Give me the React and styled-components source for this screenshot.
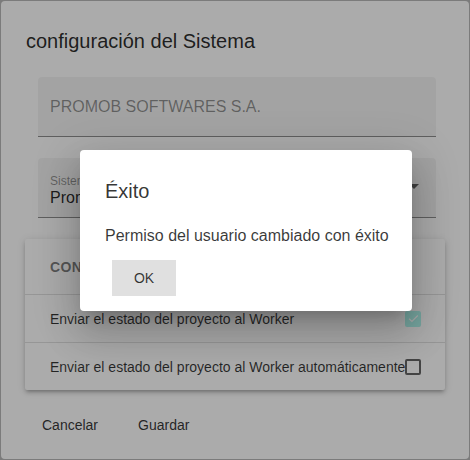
import styled, { createGlobalStyle } from "styled-components";

const GlobalStyle = createGlobalStyle`
  html, body {
    margin: 0;
    padding: 0;
    background: #b8b8b8;
    font-family: "Liberation Sans", Arial, sans-serif;
  }
`;

const Screen = styled.div`
  position: relative;
  width: 470px;
  height: 460px;
  padding: 1px;
  box-sizing: border-box;
`;

const Paper = styled.div`
  height: 458px;
  background: #ffffff;
  border-radius: 4px;
  display: flex;
  flex-direction: column;
`;

const Title = styled.h2`
  margin: 0;
  padding: 24px 25px 0;
  font-size: 20px;
  font-weight: 400;
  line-height: 32px;
  color: rgba(0, 0, 0, 0.84);
`;

const Content = styled.div`
  display: flex;
  flex-direction: column;
  padding: 20px 33px 0 24px;
  gap: 21px;
`;

const Field = styled.div`
  position: relative;
  margin-left: 13px;
  height: 59px;
  background: rgba(0, 0, 0, 0.045);
  border-radius: 4px 4px 0 0;
  border-bottom: 1px solid rgba(0, 0, 0, 0.42);
  display: flex;
  flex-direction: column;
  justify-content: center;
  padding: 0 12px;
`;

const FieldValue = styled.div`
  font-size: 16px;
  color: ${(p) => (p.$muted ? "rgba(0,0,0,0.42)" : "rgba(0,0,0,0.84)")};
  line-height: 20px;
`;

const FieldLabel = styled.div`
  font-size: 12px;
  line-height: 14px;
  color: rgba(0, 0, 0, 0.42);
  margin-top: 6px;
`;

const Arrow = styled.svg`
  position: absolute;
  right: 10px;
  top: 16px;
  width: 24px;
  height: 24px;
  fill: rgba(0, 0, 0, 0.6);
`;

const Card = styled.div`
  width: 420px;
  background: #ffffff;
  border-radius: 2px;
  box-shadow: 0 3px 3px -2px rgba(0, 0, 0, 0.2), 0 3px 4px 0 rgba(0, 0, 0, 0.14),
    0 1px 8px 0 rgba(0, 0, 0, 0.12);
  display: flex;
  flex-direction: column;
`;

const CardHeader = styled.div`
  height: 55px;
  display: flex;
  align-items: center;
  padding: 0 25px;
  font-size: 14px;
  font-weight: 700;
  letter-spacing: 0.4px;
  text-transform: uppercase;
  color: rgba(0, 0, 0, 0.52);
  border-bottom: 1px solid rgba(0, 0, 0, 0.12);
`;

const Row = styled.div`
  height: 47px;
  display: flex;
  align-items: center;
  padding: 0 0 0 25px;
  font-size: 14px;
  color: rgba(0, 0, 0, 0.78);
  white-space: nowrap;
  border-bottom: ${(p) => (p.$last ? "none" : "1px solid rgba(0, 0, 0, 0.12)")};
`;

const RowText = styled.span`
  width: 355px;
  flex-shrink: 0;
`;

const Box = styled.span`
  width: 16px;
  height: 16px;
  flex-shrink: 0;
  box-sizing: border-box;
  border-radius: 2px;
  display: flex;
  align-items: center;
  justify-content: center;
  background: ${(p) => (p.$checked ? "rgb(176, 246, 238)" : "transparent")};
  border: ${(p) => (p.$checked ? "none" : "2px solid rgba(0,0,0,0.6)")};
  svg {
    width: 13px;
    height: 13px;
  }
`;

const Actions = styled.div`
  display: flex;
  gap: 24px;
  padding: 17px 0 0 33px;
`;

const TextButton = styled.button`
  border: none;
  background: none;
  font-family: inherit;
  font-size: 14px;
  color: rgba(0, 0, 0, 0.8);
  padding: 8px;
  min-width: 64px;
  line-height: 20px;
`;

const Backdrop = styled.div`
  position: absolute;
  inset: 0;
  background: rgba(0, 0, 0, 0.33);
  padding: 150px 0 0 80px;
  box-sizing: border-box;
`;

const Modal = styled.div`
  width: 332px;
  height: 161px;
  box-sizing: border-box;
  background: #ffffff;
  border-radius: 4px;
  padding: 25px 25px 0;
  box-shadow: 0 11px 15px -7px rgba(0, 0, 0, 0.2), 0 24px 38px 3px rgba(0, 0, 0, 0.14),
    0 9px 46px 8px rgba(0, 0, 0, 0.12);
  display: flex;
  flex-direction: column;
  align-items: flex-start;
`;

const ModalTitle = styled.div`
  font-size: 20px;
  line-height: 32px;
  color: rgba(0, 0, 0, 0.8);
`;

const ModalText = styled.div`
  margin-top: 19px;
  font-size: 16px;
  line-height: 20px;
  white-space: nowrap;
  color: rgba(0, 0, 0, 0.78);
`;

const OkButton = styled.button`
  margin: 14px 0 0 7px;
  width: 64px;
  height: 36px;
  border: none;
  border-radius: 0;
  background: #e0e0e0;
  font-family: inherit;
  font-size: 14px;
  color: rgba(0, 0, 0, 0.78);
`;

const Check = () => (
  <svg viewBox="0 0 24 24">
    <path d="M4 12.5l5 5L20 6.5" fill="none" stroke="#ffffff" strokeWidth="2.2" />
  </svg>
);

export default function App() {
  return (
    <>
      <GlobalStyle />
      <Screen>
        <Paper>
          <Title>configuración del Sistema</Title>
          <Content>
            <Field>
              <FieldValue $muted>PROMOB SOFTWARES S.A.</FieldValue>
            </Field>
            <Field>
              <FieldLabel>Sistema</FieldLabel>
              <FieldValue>Promob</FieldValue>
              <Arrow viewBox="0 0 24 24">
                <path d="M7 10l5 5 5-5z" />
              </Arrow>
            </Field>
            <Card>
              <CardHeader>Configuración</CardHeader>
              <Row>
                <RowText>Enviar el estado del proyecto al Worker</RowText>
                <Box $checked>
                  <Check />
                </Box>
              </Row>
              <Row $last>
                <RowText>Enviar el estado del proyecto al Worker automáticamente</RowText>
                <Box />
              </Row>
            </Card>
          </Content>
          <Actions>
            <TextButton>Cancelar</TextButton>
            <TextButton>Guardar</TextButton>
          </Actions>
        </Paper>
        <Backdrop>
          <Modal>
            <ModalTitle>Éxito</ModalTitle>
            <ModalText>Permiso del usuario cambiado con éxito</ModalText>
            <OkButton>OK</OkButton>
          </Modal>
        </Backdrop>
      </Screen>
    </>
  );
}
